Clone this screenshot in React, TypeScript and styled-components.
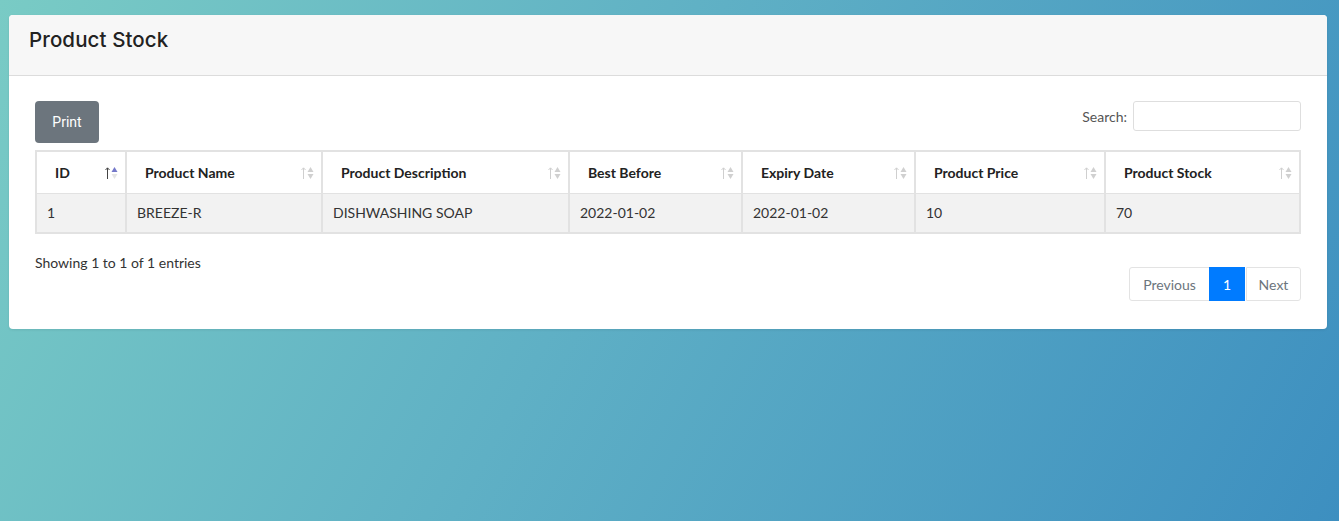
import React from "react";
import styled, { createGlobalStyle } from "styled-components";

const Global = createGlobalStyle`
  html, body { margin: 0; padding: 0; }
  body {
    min-height: 521px;
    background: linear-gradient(118deg, #79cbc5 0%, #5fb0c5 45%, #3d8fc0 100%);
    font-family: Lato, "Open Sans", sans-serif;
    color: #333;
  }
`;

const Page = styled.div`
  padding: 15px 12px 0 9px;
`;

const Card = styled.div`
  background: #fff;
  border-radius: 4px;
  overflow: hidden;
  box-shadow: 0 1px 3px rgba(0, 0, 0, 0.08);
`;

const CardHeader = styled.div`
  height: 61px;
  box-sizing: border-box;
  background: #f7f7f7;
  border-bottom: 1px solid #dcdcdc;
  display: flex;
  align-items: flex-start;
  padding: 13px 20px 0;
`;

const Title = styled.h3`
  margin: 0;
  font-family: Inter, "Open Sans", sans-serif;
  font-weight: 500;
  font-size: 20.5px;
  line-height: 24px;
  color: #222;
  letter-spacing: 0.1px;
`;

const CardBody = styled.div`
  padding: 25px 26px 28px 26px;
`;

const TopBar = styled.div`
  display: flex;
  justify-content: space-between;
  align-items: flex-start;
`;

const PrintButton = styled.button`
  width: 64px;
  height: 42px;
  border: none;
  border-radius: 4px;
  background: #6c757d;
  color: #fff;
  font-family: Roboto, sans-serif;
  font-size: 14px;
  cursor: pointer;
`;

const SearchLabel = styled.label`
  display: flex;
  align-items: center;
  gap: 6px;
  font-size: 14px;
  color: #555;
`;

const SearchInput = styled.input`
  width: 168px;
  height: 30px;
  box-sizing: border-box;
  border: 1px solid #dedede;
  border-radius: 3px;
  outline: none;
`;

const Table = styled.table`
  width: 1264px;
  margin-top: 7px;
  border-collapse: collapse;
  table-layout: fixed;
  font-size: 14px;
  border: 2px solid #e2e2e2;
`;

const Th = styled.th<{ $w: number }>`
  width: ${(p) => p.$w}px;
  height: 42px;
  box-sizing: border-box;
  position: relative;
  text-align: left;
  padding: 0 30px 0 18px;
  font-weight: 700;
  color: #222;
  border: 2px solid #e2e2e2;
  border-bottom-width: 1px;
  background: #fff;
`;

const Td = styled.td`
  height: 40px;
  box-sizing: border-box;
  padding: 0 10px;
  color: #333;
  background: #f2f2f2;
  border: 2px solid #e2e2e2;
  border-top-width: 1px;
`;

const SortIcon = styled.svg`
  position: absolute;
  right: 6px;
  top: 13px;
`;

const Footer = styled.div`
  display: flex;
  justify-content: space-between;
  align-items: flex-start;
  margin-top: 19px;
`;

const Info = styled.div`
  font-size: 14px;
  line-height: 20px;
  color: #333;
`;

const Pager = styled.div`
  display: flex;
  margin-top: 14px;
`;

const PageBtn = styled.button<{ $active?: boolean; $w: number }>`
  width: ${(p) => p.$w}px;
  height: 34px;
  box-sizing: border-box;
  font-family: Lato, sans-serif;
  font-size: 14px;
  border: 1px solid ${(p) => (p.$active ? "#007bff" : "#e3e3e3")};
  background: ${(p) => (p.$active ? "#007bff" : "#fff")};
  color: ${(p) => (p.$active ? "#fff" : "#6c757d")};
  margin-left: -1px;
  &:first-child { border-radius: 3px 0 0 3px; margin-left: 0; }
  &:last-child { border-radius: 0 3px 3px 0; margin-left: 1px; }
`;

const Sort = ({ active }: { active?: boolean }) => (
  <SortIcon width="16" height="16" viewBox="0 0 16 16">
    <g stroke={active ? "#444" : "#cfcfcf"} strokeWidth="1" fill="none">
      <line x1="4.5" y1="3" x2="4.5" y2="14" />
      <path d="M2.5 5 L4.5 2.8 L6.5 5" />
    </g>
    <path d="M8.5 7 L11.5 2 L14.5 7 Z" fill={active ? "#7478c9" : "#d0d0d0"} />
    <path d="M8.5 9 L11.5 14 L14.5 9 Z" fill={active ? "#e4e4e4" : "#d0d0d0"} />
  </SortIcon>
);

const columns: { label: string; w: number }[] = [
  { label: "ID", w: 90 },
  { label: "Product Name", w: 196 },
  { label: "Product Description", w: 247 },
  { label: "Best Before", w: 173 },
  { label: "Expiry Date", w: 173 },
  { label: "Product Price", w: 190 },
  { label: "Product Stock", w: 195 },
];

const row = ["1", "BREEZE-R", "DISHWASHING SOAP", "2022-01-02", "2022-01-02", "10", "70"];

export default function App() {
  return (
    <>
      <Global />
      <Page>
        <Card>
          <CardHeader>
            <Title>Product Stock</Title>
          </CardHeader>
          <CardBody>
            <TopBar>
              <PrintButton>Print</PrintButton>
              <SearchLabel>
                Search:
                <SearchInput type="search" />
              </SearchLabel>
            </TopBar>
            <Table>
              <thead>
                <tr>
                  {columns.map((c, i) => (
                    <Th key={c.label} $w={c.w}>
                      {c.label}
                      <Sort active={i === 0} />
                    </Th>
                  ))}
                </tr>
              </thead>
              <tbody>
                <tr>
                  {row.map((v, i) => (
                    <Td key={i}>{v}</Td>
                  ))}
                </tr>
              </tbody>
            </Table>
            <Footer>
              <Info>Showing 1 to 1 of 1 entries</Info>
              <Pager>
                <PageBtn $w={81}>Previous</PageBtn>
                <PageBtn $w={36} $active>1</PageBtn>
                <PageBtn $w={55}>Next</PageBtn>
              </Pager>
            </Footer>
          </CardBody>
        </Card>
      </Page>
    </>
  );
}
